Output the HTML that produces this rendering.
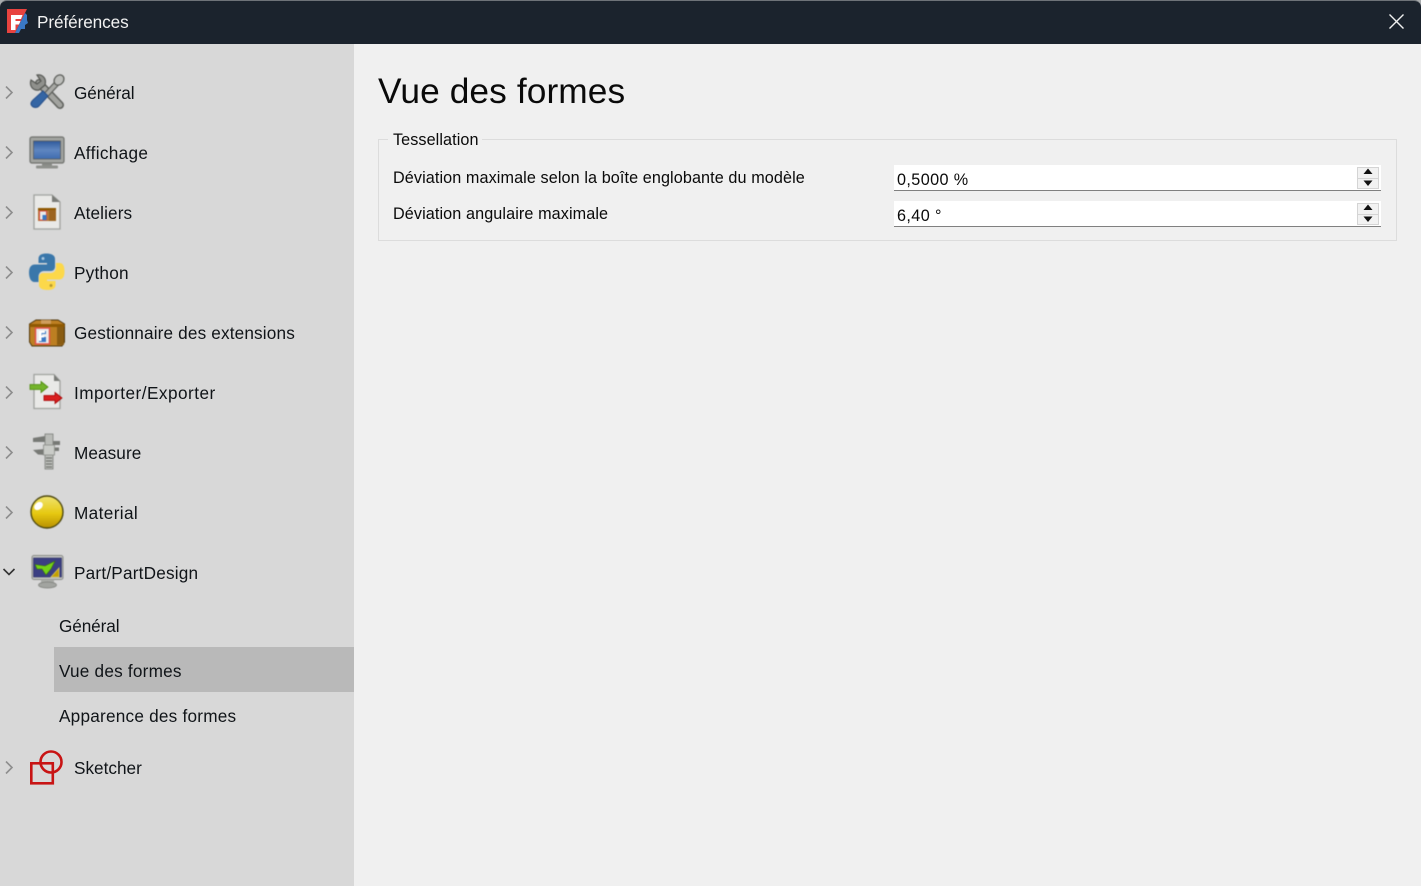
<!DOCTYPE html>
<html lang="fr"><head><meta charset="utf-8"><title>Préférences</title>
<style>
html,body{margin:0;padding:0;width:1421px;height:886px;overflow:hidden;background:#f0f0f0;font-family:"Liberation Sans",sans-serif;color:#000}
div,svg{position:absolute}
.t{white-space:nowrap;line-height:24px;height:24px;font-size:17.2px;color:#101418}
.i{left:28px;width:38px;height:38px;filter:blur(.45px)}
.c{left:3px;width:12px;height:14px}
.f{white-space:nowrap;line-height:22px;height:22px;font-size:16.2px;color:#0a0a0a}
.inp{left:894px;width:487px;height:25px;background:#fff;border-bottom:1px solid #808080}
.spin{left:1357px;width:22px;height:22px;background:#f2f2f2;border:1px solid #d4d4d4;box-sizing:border-box}
</style></head><body>
<div style="left:0;top:0;width:1421px;height:44px;background:#a9acae"></div>
<div style="left:0;top:0;width:1421px;height:44px;background:#1b232d;border-radius:7px 7px 0 0;box-sizing:border-box;border-top:1px solid #6e7378"></div>
<svg style="left:6px;top:8px;width:22px;height:26px" viewBox="0 0 22 26">
<path d="M1 1H21L19 5L9 25H1Z" fill="#e8433f"/>
<path d="M19 5L21 7V12L22 15L19 17L19 21L15 21L13 25H9Z" fill="#3a78c4"/>
<path d="M5 7H16.500L15 11H9.500V13H14.500L13 16.500H9.500V22H5Z" fill="#fff"/>
</svg>
<div class="t" style="left:37px;top:10px;color:#f2f2f2;letter-spacing:-.1px">Préférences</div>
<svg style="left:1388px;top:13px;width:17px;height:17px" viewBox="0 0 17 17"><path d="M1.500 1.500L15.500 15.500M15.500 1.500L1.500 15.500" stroke="#f0f0f0" stroke-width="1.400"/></svg>

<div style="left:0;top:44px;width:354px;height:842px;background:#d8d8d8"></div>
<div style="left:54px;top:647px;width:300px;height:45px;background:#b9b9b9"></div>

<svg class="c" style="top:86px" viewBox="0 0 12 14"><path d="M3 .500L9 6.500L3 12.500" fill="none" stroke="#8e8e8e" stroke-width="1.600"/></svg>
<svg class="c" style="top:146px" viewBox="0 0 12 14"><path d="M3 .500L9 6.500L3 12.500" fill="none" stroke="#8e8e8e" stroke-width="1.600"/></svg>
<svg class="c" style="top:206px" viewBox="0 0 12 14"><path d="M3 .500L9 6.500L3 12.500" fill="none" stroke="#8e8e8e" stroke-width="1.600"/></svg>
<svg class="c" style="top:266px" viewBox="0 0 12 14"><path d="M3 .500L9 6.500L3 12.500" fill="none" stroke="#8e8e8e" stroke-width="1.600"/></svg>
<svg class="c" style="top:326px" viewBox="0 0 12 14"><path d="M3 .500L9 6.500L3 12.500" fill="none" stroke="#8e8e8e" stroke-width="1.600"/></svg>
<svg class="c" style="top:386px" viewBox="0 0 12 14"><path d="M3 .500L9 6.500L3 12.500" fill="none" stroke="#8e8e8e" stroke-width="1.600"/></svg>
<svg class="c" style="top:446px" viewBox="0 0 12 14"><path d="M3 .500L9 6.500L3 12.500" fill="none" stroke="#8e8e8e" stroke-width="1.600"/></svg>
<svg class="c" style="top:506px" viewBox="0 0 12 14"><path d="M3 .500L9 6.500L3 12.500" fill="none" stroke="#8e8e8e" stroke-width="1.600"/></svg>
<svg class="c" style="top:761px" viewBox="0 0 12 14"><path d="M3 .500L9 6.500L3 12.500" fill="none" stroke="#8e8e8e" stroke-width="1.600"/></svg>
<svg style="left:1px;top:566px;width:16px;height:12px" viewBox="0 0 16 12"><path d="M2.500 3L8 8.500L13.500 3" fill="none" stroke="#333" stroke-width="1.600"/></svg>

<!-- Général -->
<svg class="i" style="top:73px" viewBox="0 0 38 38">
<path d="M11 10L32 32" stroke="#5e605c" stroke-width="8" stroke-linecap="round"/>
<path d="M11 10L32 32" stroke="#a2a39f" stroke-width="5" stroke-linecap="round"/>
<path d="M3 7L9 11L13 8L9 2C14 1 19 5 17 12L11 17C5 18 1 13 3 7Z" fill="#8f908c" stroke="#555753" stroke-width="1.200"/>
<path d="M31 8L18 22" stroke="#5e605c" stroke-width="6"/>
<path d="M31 8L18 22" stroke="#a8a9a5" stroke-width="3.500"/>
<ellipse cx="31" cy="7" rx="4.500" ry="5.500" transform="rotate(40 31 7)" fill="#bdbebb" stroke="#5e605c" stroke-width="1.300"/>
<path d="M15 18L20 23L11 33C9 35 6 35 4 33C2 31 3 29 5 27Z" fill="#3465a4" stroke="#28508a" stroke-width="1"/>
</svg>
<div class="t" style="left:74px;top:81px;letter-spacing:-.1px">Général</div>

<!-- Affichage -->
<svg class="i" style="top:133px" viewBox="0 0 38 38">
<defs><linearGradient id="b" x1="0" y1="0" x2="0" y2="1"><stop offset="0" stop-color="#2f5a9c"/><stop offset=".5" stop-color="#5f86c0"/><stop offset="1" stop-color="#3f6cb0"/></linearGradient></defs>
<rect x="2" y="4" width="34" height="26" rx="2" fill="#a2a4a0" stroke="#6f716d" stroke-width="1.200"/>
<rect x="5.500" y="8" width="27" height="18" fill="url(#b)" stroke="#55585a" stroke-width=".7"/>
<rect x="14" y="30" width="10" height="3" fill="#888a85"/>
<rect x="8" y="32.500" width="22" height="3" rx="1" fill="#8f918d"/>
</svg>
<div class="t" style="left:74px;top:141px;letter-spacing:.33px">Affichage</div>

<!-- Ateliers -->
<svg class="i" style="top:193px" viewBox="0 0 38 38">
<path d="M6 2H24L32 9V36H6Z" fill="#e9e9e7" stroke="#a0a29e" stroke-width="1.300"/>
<path d="M24 2V9H32Z" fill="#7a7c78"/>
<rect x="10" y="15" width="18" height="13" fill="#b5793a"/>
<rect x="10" y="15" width="18" height="2.500" fill="#8f5902"/>
<rect x="21" y="17" width="7" height="11" fill="#9c6420"/>
<rect x="11.500" y="18" width="7" height="9" fill="#e9e9e9" stroke="#d64b40"/>
<rect x="14.500" y="22" width="4" height="5" fill="#3a78c4"/>
</svg>
<div class="t" style="left:74px;top:201px;letter-spacing:.12px">Ateliers</div>

<!-- Python -->
<svg class="i" style="top:253px" viewBox="0 0 38 38">
<path d="M18.500 .500C12 .500 10.500 3 10.500 6V10H19V11.500H7C3 11.500 1 14.500 1 19.500C1 25 3 29 6.500 29H10.500V24C10.500 20.500 12.500 18 16 18H23C25.500 18 27 16 27 13.500V6C27 2.500 24 .500 18.500 .500Z" fill="#3a77aa"/>
<path d="M19.500 37C26 37 27.500 34.500 27.500 32V28H19V26.500H31C35 26.500 36.500 23.500 36.500 18.500C36.500 13 35 10 31.500 10H28V14.500C28 18 25.500 20 22.500 20H15C12.500 20 11 22 11 25V32C11 35 14 37 19.500 37Z" fill="#fcd84a"/>
<circle cx="15" cy="5.500" r="1.500" fill="#a8c6de"/><circle cx="23" cy="32.500" r="1.500" fill="#b89a30"/>
</svg>
<div class="t" style="left:74px;top:261px;letter-spacing:.2px">Python</div>

<!-- Extensions -->
<svg class="i" style="top:313px" viewBox="0 0 38 38">
<path d="M1.500 11L8 7H30L36.500 11V29L34 33H4L1.500 29Z" fill="#bd7f22" stroke="#4f360c" stroke-width="1"/>
<path d="M1.500 11H36.500V14H1.500Z" fill="#8f5902"/>
<path d="M13 7H23V11H13Z" fill="#cf9d5c"/>
<path d="M29 14H36V32H29Z" fill="#8a5c12"/>
<rect x="7.500" y="15" width="14" height="16" fill="#ececec" stroke="#e0504a" stroke-width="1.500"/>
<path d="M11 18H18V21H14V24H18V29H11Z" fill="#3a78c4"/>
<path d="M11 18H17V20H13.500V22.500H16V24.500H13.500V28H11Z" fill="#fff"/>
</svg>
<div class="t" style="left:74px;top:321px;letter-spacing:.15px">Gestionnaire des extensions</div>

<!-- Importer -->
<svg class="i" style="top:373px" viewBox="0 0 38 38">
<path d="M6 1.500H26L32 8V35.500H6Z" fill="#e9e9e7" stroke="#a0a29e" stroke-width="1.300"/>
<path d="M26 1.500V8H32Z" fill="#7a7c78"/>
<path d="M2 11.500H13V8.500L20 14L13 19.500V16.500H2Z" fill="#73b32a" stroke="#4e8a10" stroke-width=".8"/>
<path d="M16 22.500H27V19.500L34 25L27 30.500V27.500H16Z" fill="#d91f1f" stroke="#a40000" stroke-width=".8"/>
</svg>
<div class="t" style="left:74px;top:381px;letter-spacing:.47px">Importer/Exporter</div>

<!-- Measure -->
<svg class="i" style="top:433px" viewBox="0 0 38 38">
<path d="M5 5L17 3V9L5 9Z" fill="#777975"/>
<path d="M5 17L17 16V22L10 21.500Z" fill="#777975"/>
<path d="M25 8H32V12H25ZM25 14.500H31V18H25Z" fill="#777975"/>
<rect x="17" y="1" width="8" height="35" fill="#b9bbb7" stroke="#7d7f7b" stroke-width=".8"/>
<rect x="15.500" y="12" width="11" height="10" fill="#c9cbc7" stroke="#8a8c88" stroke-width=".8"/>
<path d="M18 25H24M18 28H24M18 31H24M18 34H24" stroke="#6a6c68" stroke-width="1"/>
</svg>
<div class="t" style="left:74px;top:441px;letter-spacing:.07px">Measure</div>

<!-- Material -->
<svg class="i" style="top:493px" viewBox="0 0 38 38">
<defs><linearGradient id="g" x1="0" y1="0" x2="0" y2="1"><stop offset="0" stop-color="#f0e470"/><stop offset=".55" stop-color="#e6c810"/><stop offset="1" stop-color="#b89000"/></linearGradient></defs>
<circle cx="19" cy="19" r="16" fill="url(#g)" stroke="#4f4a10" stroke-width="1.400"/>
<ellipse cx="10.500" cy="13" rx="4.800" ry="3.500" fill="#fff" transform="rotate(-40 10.500 13)"/>
</svg>
<div class="t" style="left:74px;top:501px;letter-spacing:.37px">Material</div>

<!-- Part -->
<svg class="i" style="top:553px" viewBox="0 0 38 38">
<rect x="4" y="2.500" width="31" height="24" rx="2" fill="#c4c6c2" stroke="#8a8c88"/>
<rect x="5.500" y="5" width="28" height="19" fill="#3b3f82" stroke="#2a2c60" stroke-width=".6"/>
<path d="M7 11.500L17 13L27 8L23 16L18 22L14 16H9Z" fill="#73d216" stroke="#3b6e08" stroke-width=".6"/>
<path d="M31 15V24H23Z" fill="#c4a000" stroke="#d8c46a" stroke-width=".8"/>
<path d="M13 26.500H26V31H13Z" fill="#a8aaa6"/>
<ellipse cx="19.500" cy="32" rx="9" ry="3" fill="#a2a4a0" stroke="#7d7f7b" stroke-width=".7"/>
</svg>
<div class="t" style="left:74px;top:561px;letter-spacing:.2px">Part/PartDesign</div>

<div class="t" style="left:59px;top:614px;letter-spacing:-.1px">Général</div>
<div class="t" style="left:59px;top:659px;letter-spacing:.21px">Vue des formes</div>
<div class="t" style="left:59px;top:704px;letter-spacing:.22px">Apparence des formes</div>

<!-- Sketcher -->
<svg class="i" style="top:748px;filter:blur(.3px)" viewBox="0 0 38 38">
<rect x="3.300" y="15.300" width="21.500" height="20" fill="none" stroke="#c81414" stroke-width="2.600"/>
<circle cx="23" cy="14" r="10.500" fill="none" stroke="#c81414" stroke-width="2.600"/>
</svg>
<div class="t" style="left:74px;top:756px">Sketcher</div>

<!-- Content -->
<div style="left:378px;top:69px;white-space:nowrap;line-height:46px;font-size:35.300px;color:#0a0a0a;letter-spacing:.1px">Vue des formes</div>
<div style="left:378px;top:139px;width:1019px;height:102px;box-sizing:border-box;border:1px solid #dcdcdc"></div>
<div style="left:388px;top:130px;width:94px;height:20px;background:#f0f0f0"></div>
<div class="f" style="left:393px;top:129px;letter-spacing:.08px">Tessellation</div>
<div class="f" style="left:393px;top:167px;letter-spacing:.095px">Déviation maximale selon la boîte englobante du modèle</div>
<div class="f" style="left:393px;top:203px;letter-spacing:.1px">Déviation angulaire maximale</div>

<div class="inp" style="top:165px"></div>
<div class="inp" style="top:201px"></div>
<div class="f" style="left:897px;top:169px;letter-spacing:.4px">0,5000 %</div>
<div class="f" style="left:897px;top:205px;letter-spacing:.4px">6,40 °</div>

<div class="spin" style="top:167px"></div>
<div style="left:1357px;top:178px;width:22px;height:1px;background:#d4d4d4"></div>
<svg style="left:1363px;top:168px;width:10px;height:19px" viewBox="0 0 10 19"><path d="M5 .500L9.500 6H.500ZM.500 12.500H9.500L5 18Z" fill="#111"/></svg>
<div class="spin" style="top:203px"></div>
<div style="left:1357px;top:214px;width:22px;height:1px;background:#d4d4d4"></div>
<svg style="left:1363px;top:204px;width:10px;height:19px" viewBox="0 0 10 19"><path d="M5 .500L9.500 6H.500ZM.500 12.500H9.500L5 18Z" fill="#111"/></svg>
</body></html>
